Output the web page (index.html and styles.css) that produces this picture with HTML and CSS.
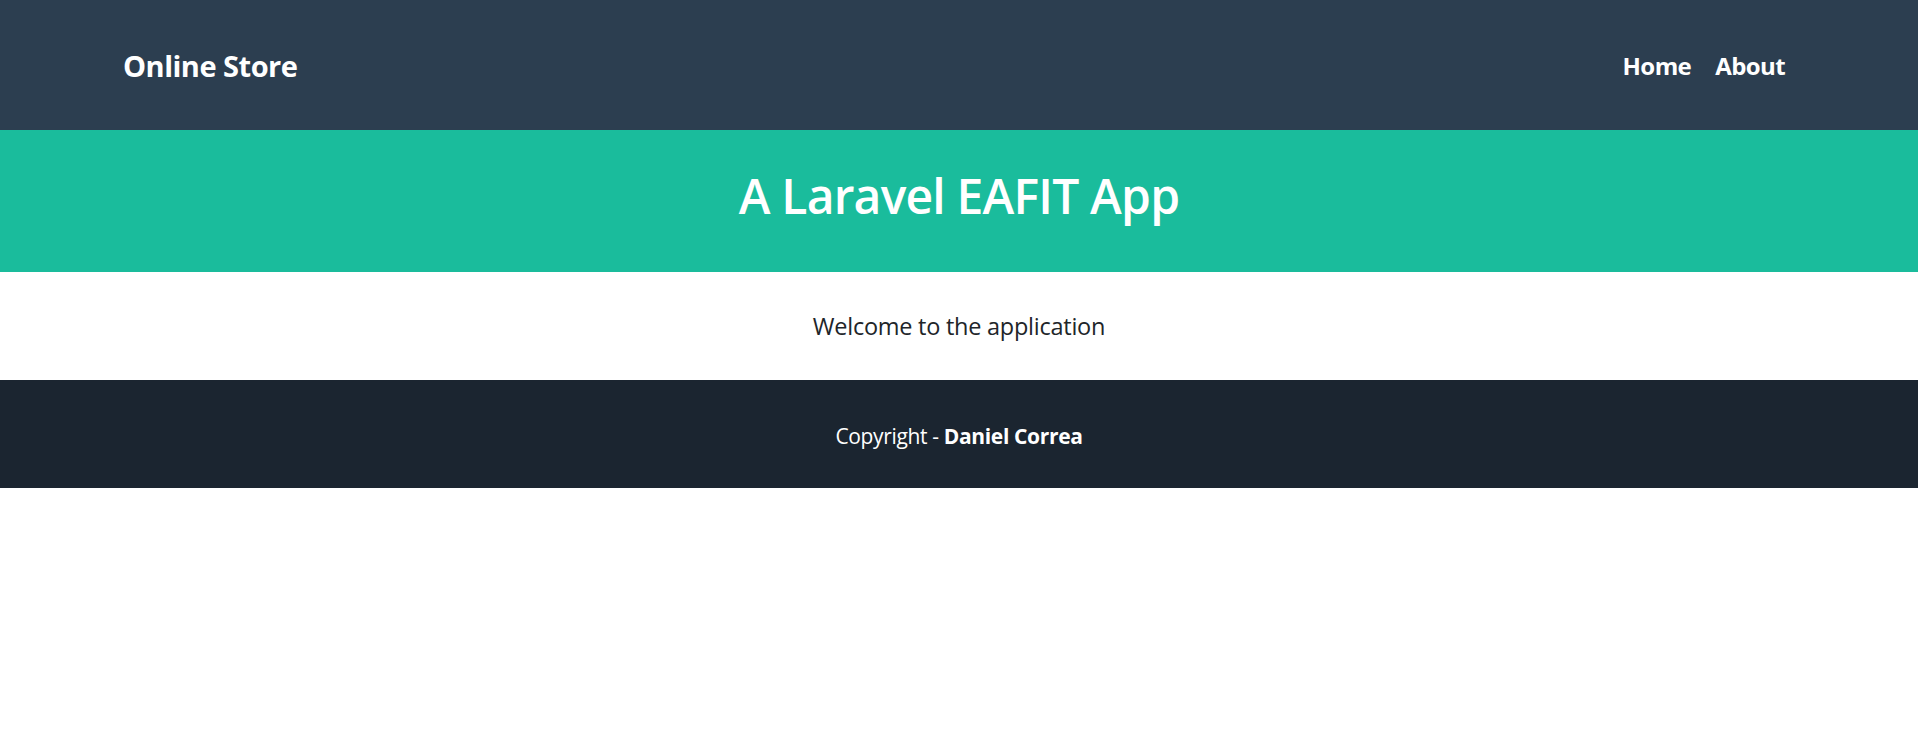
FILE: index.html
```html
<!DOCTYPE html>
<html lang="en">
<head>
<meta charset="utf-8">
<title>Online Store</title>
<link rel="stylesheet" href="styles.css">
</head>
<body>
<header class="navbar">
  <a class="brand" href="#">Online Store</a>
  <nav class="nav-links">
    <a class="nav-link" href="#">Home</a>
    <a class="nav-link" href="#">About</a>
  </nav>
</header>
<section class="masthead">
  <h1 class="title">A Laravel EAFIT App</h1>
</section>
<main class="content">
  <p class="welcome">Welcome to the application</p>
</main>
<footer class="footer">
  <p class="copy">Copyright - <b>Daniel Correa</b></p>
</footer>
</body>
</html>
```
FILE: styles.css
```css
* { box-sizing: border-box; }
html, body { margin: 0; padding: 0; }
body {
  font-family: "Open Sans", "Noto Sans", sans-serif;
  color: #212529;
  background: #fff;
}
a { text-decoration: none; color: #fff; }
.navbar {
  background: #2c3e50;
  height: 130px;
  padding: 0 133px 0 123px;
  display: flex;
  justify-content: space-between;
  align-items: center;
}
.brand {
  font-weight: 700;
  font-size: 29px;
  letter-spacing: -0.5px;
}
.nav-links { display: flex; gap: 24px; padding-top: 1px; }
.nav-link {
  font-weight: 700;
  font-size: 24px;
  letter-spacing: -0.6px;
}
.masthead {
  background: #1abc9c;
  height: 142px;
  padding-bottom: 10px;
  display: flex;
  align-items: center;
  justify-content: center;
}
.title {
  margin: 0;
  color: #fff;
  font-weight: 600;
  font-size: 48px;
  letter-spacing: -0.8px;
  line-height: 1.2;
}
.content {
  height: 108px;
  display: flex;
  align-items: center;
  justify-content: center;
}
.welcome {
  margin: 0;
  font-size: 23.5px;
  letter-spacing: -0.25px;
}
.footer {
  background: #1b2530;
  height: 108px;
  padding-top: 4px;
  display: flex;
  align-items: center;
  justify-content: center;
  color: #fff;
}
.copy {
  margin: 0;
  font-size: 21px;
  letter-spacing: -0.35px;
}
.copy b { font-weight: 700; }
```
